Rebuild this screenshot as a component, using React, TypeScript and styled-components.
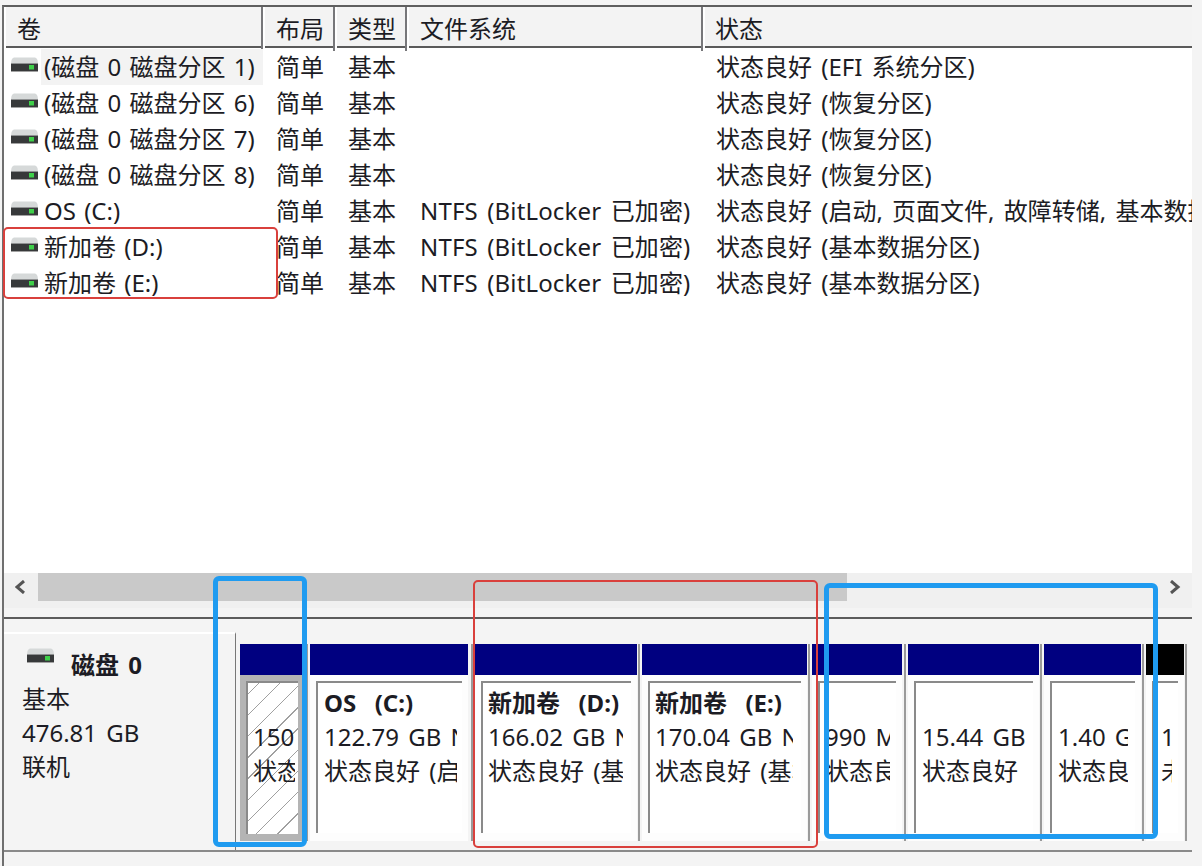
import React from 'react'
import styled, { createGlobalStyle } from 'styled-components'

const GlobalStyle = createGlobalStyle`
    html, body {
        margin: 0;
        padding: 0;
        background: #f4f4f4;
    }
    body {
        font-family: "Noto Sans", "Noto Sans CJK SC", sans-serif;
        font-size: 24px;
        word-spacing: 3px;
        color: #1c1c24;
    }
`

const Page = styled.div`
    position: relative;
    width: 1202px;
    height: 866px;
    overflow: hidden;
    display: flex;
    flex-direction: column;
    box-sizing: border-box;
    padding: 5px 10px 0 2px;
    background: #f4f4f4;
`

const Frame = styled.div`
    flex: 1;
    display: flex;
    flex-direction: column;
    min-height: 0;
    border-left: 2px solid #6f6f6f;
    border-top: 2px solid #5f5f5f;
    background: #fff;
`

const HeaderRow = styled.div`
    display: grid;
    grid-template-columns: 259px 72px 72px 296px 1fr;
    height: 39px;
    flex: none;
    border-bottom: 2px solid #5a5a5a;
    background: #f3f3f3;
`

const HeaderCell = styled.div<{ $pad: number }>`
    padding-left: ${(p) => p.$pad}px;
    border-right: 2px solid #77777a;
    box-shadow: inset 2px 0 0 #fff;
    line-height: 44px;
    &:last-child {
        border-right: none;
    }
`

const List = styled.div`
    flex: 1;
    min-height: 0;
    padding-top: 1px;
`

const Row = styled.div`
    display: grid;
    grid-template-columns: 259px 72px 72px 296px 1fr;
    height: 36px;
    line-height: 36px;
    white-space: nowrap;
`

const NameCell = styled.div`
    display: flex;
    align-items: center;
    gap: 3px;
    padding-left: 7px;
    overflow: hidden;
`

const NameText = styled.span<{ $active?: boolean }>`
    flex: 1;
    padding-left: 3px;
    word-spacing: 2px;
    background: ${(p) => (p.$active ? '#f3f3f3' : 'transparent')};
`

const Cell = styled.div`
    padding-left: 13px;
    overflow: hidden;
`

const FsCell = styled(Cell)`
    letter-spacing: 0.15px;
`

const ScrollBar = styled.div`
    flex: none;
    height: 28px;
    display: flex;
    align-items: stretch;
    background: #f0f0f0;
`

const ScrollArrow = styled.div`
    width: 34px;
    flex: none;
    display: flex;
    align-items: center;
    justify-content: center;
`

const ScrollTrack = styled.div`
    flex: 1;
`

const ScrollThumb = styled.div`
    width: 809px;
    height: 100%;
    background: #c9c9c9;
`

const SplitGap = styled.div`
    flex: none;
    height: 18px;
    box-sizing: border-box;
    background: #f4f4f4;
    border-top: 7px solid #f0f0f0;
    border-bottom: 2px solid #5c5c5c;
`

const DiskPanel = styled.div`
    flex: none;
    height: 233px;
    display: flex;
    background: #f4f4f4;
    border-bottom: 2px solid #8a8a8a;
    box-sizing: border-box;
`

const DiskInfo = styled.div`
    flex: none;
    width: 232px;
    box-sizing: border-box;
    margin-top: 13px;
    padding: 14px 0 0 18px;
    border-top: 2px solid #fff;
    border-right: 1px solid #777;
    line-height: 34px;
`

const DiskTitle = styled.div`
    display: flex;
    align-items: center;
    gap: 17px;
    padding-left: 5px;
    font-weight: 700;
    & > svg {
        margin-bottom: 18px;
    }
`

const Volumes = styled.div`
    flex: 1;
    display: flex;
    padding: 25px 0 9px 4px;
    min-width: 0;
`

const Volume = styled.div<{ $width: number; $gap: number }>`
    flex: none;
    width: ${(p) => p.$width - 2}px;
    margin-right: 2px;
    box-sizing: border-box;
    display: flex;
    flex-direction: column;
    border-right: 2px solid #9a9a9a;
    padding-right: ${(p) => p.$gap - 4}px;
`

const VolumeBar = styled.div<{ $free?: boolean }>`
    flex: none;
    height: 31px;
    background: ${(p) => (p.$free ? '#000' : '#000080')};
`

const VolumeBody = styled.div<{ $hatched?: boolean }>`
    flex: 1;
    min-height: 0;
    padding: 6px ${(p) => (p.$hatched ? 4 : 6)}px ${(p) => (p.$hatched ? 7 : 8)}px 6px;
    background: ${(p) => (p.$hatched ? '#b4b4b4' : '#fdfdfd')};
`

const VolumeInner = styled.div<{ $hatched?: boolean }>`
    height: 100%;
    box-sizing: border-box;
    border-left: 2px solid #8a8a8a;
    border-top: 2px solid #8a8a8a;
    padding-top: 3px;
    background: ${(p) =>
        p.$hatched
            ? 'repeating-linear-gradient(-45deg, #fff 0 14px, #a0a0a0 14px 15px)'
            : '#fff'};
`

const VolumeText = styled.div<{ $pad: number; $clip: number }>`
    overflow: hidden;
    margin-right: ${(p) => p.$clip}px;
    padding-left: ${(p) => p.$pad}px;
    line-height: 34px;
    white-space: pre;
`

const VolumeName = styled.div`
    font-weight: 700;
    height: 34px;
`

const Footer = styled.div`
    flex: none;
    height: 14px;
    background: #f4f4f4;
`

const Mark = styled.div<{ $x: number; $y: number; $w: number; $h: number; $blue?: boolean }>`
    position: absolute;
    left: ${(p) => p.$x}px;
    top: ${(p) => p.$y}px;
    width: ${(p) => p.$w}px;
    height: ${(p) => p.$h}px;
    box-sizing: border-box;
    border: ${(p) => (p.$blue ? '5px solid #1f9bf0' : '2px solid #d9403c')};
    border-radius: ${(p) => (p.$blue ? 6 : 5)}px;
    pointer-events: none;
`

const DriveSvg = styled.svg`
    flex: none;
    margin-bottom: 4px;
`

const DriveIcon: React.FC = () => (
    <DriveSvg width="27" height="16" viewBox="0 0 27 16">
        <path d="M3 0.5 H24 Q25.5 0.5 26.5 3 L27 6.5 H0 L0.5 3 Q1.5 0.5 3 0.5 Z" fill="#d6d9d9" />
        <rect x="0" y="6.5" width="27" height="7.5" fill="#37393a" />
        <rect x="0" y="14" width="27" height="1" fill="#a2a2a2" />
        <rect x="18" y="8" width="5" height="4.5" fill="#3fd04a" />
    </DriveSvg>
)

const Chevron: React.FC<{ dir: 'left' | 'right' }> = ({ dir }) => (
    <svg width="12" height="14" viewBox="0 0 12 14">
        <path
            d={dir === 'left' ? 'M9 1 L2 7 L9 13' : 'M2 1 L9 7 L2 13'}
            fill="none"
            stroke="#555"
            strokeWidth="3"
        />
    </svg>
)

const rows = [
    { name: '(磁盘 0 磁盘分区 1)', fs: '', status: '状态良好 (EFI 系统分区)', active: true },
    { name: '(磁盘 0 磁盘分区 6)', fs: '', status: '状态良好 (恢复分区)' },
    { name: '(磁盘 0 磁盘分区 7)', fs: '', status: '状态良好 (恢复分区)' },
    { name: '(磁盘 0 磁盘分区 8)', fs: '', status: '状态良好 (恢复分区)' },
    { name: 'OS (C:)', fs: 'NTFS (BitLocker 已加密)', status: '状态良好 (启动, 页面文件, 故障转储, 基本数据分区)' },
    { name: '新加卷 (D:)', fs: 'NTFS (BitLocker 已加密)', status: '状态良好 (基本数据分区)' },
    { name: '新加卷 (E:)', fs: 'NTFS (BitLocker 已加密)', status: '状态良好 (基本数据分区)' },
]

const volumes = [
    { width: 70, gap: 8, pad: 5, clip: 3, size: '150 MB', status: '状态良好', hatched: true },
    { width: 165, gap: 7, pad: 6, clip: 5, name: 'OS  (C:)', size: '122.79 GB NTFS', status: '状态良好 (启动)' },
    { width: 167, gap: 5, pad: 5, clip: 8, name: '新加卷  (D:)', size: '166.02 GB NTFS', status: '状态良好 (基本)' },
    { width: 170, gap: 5, pad: 5, clip: 8, name: '新加卷  (E:)', size: '170.04 GB NTFS', status: '状态良好 (基本)' },
    { width: 96, gap: 6, pad: 5, clip: 6, size: '990 MB', status: '状态良好' },
    { width: 136, gap: 5, pad: 6, clip: 5, size: '15.44 GB', status: '状态良好' },
    { width: 102, gap: 5, pad: 6, clip: 7, size: '1.40 GB', status: '状态良好' },
    { width: 43, gap: 5, pad: 7, clip: 6, size: '15 MB', status: '未分配', free: true },
]

const App: React.FC = () => {
    return (
        <Page>
            <GlobalStyle />
            <Frame>
                <HeaderRow>
                    <HeaderCell $pad={13}>卷</HeaderCell>
                    <HeaderCell $pad={13}>布局</HeaderCell>
                    <HeaderCell $pad={13}>类型</HeaderCell>
                    <HeaderCell $pad={13}>文件系统</HeaderCell>
                    <HeaderCell $pad={12}>状态</HeaderCell>
                </HeaderRow>
                <List>
                    {rows.map((r) => (
                        <Row key={r.name}>
                            <NameCell>
                                <DriveIcon />
                                <NameText $active={r.active}>{r.name}</NameText>
                            </NameCell>
                            <Cell>简单</Cell>
                            <Cell>基本</Cell>
                            <FsCell>{r.fs}</FsCell>
                            <Cell>{r.status}</Cell>
                        </Row>
                    ))}
                </List>
                <ScrollBar>
                    <ScrollArrow>
                        <Chevron dir="left" />
                    </ScrollArrow>
                    <ScrollTrack>
                        <ScrollThumb />
                    </ScrollTrack>
                    <ScrollArrow>
                        <Chevron dir="right" />
                    </ScrollArrow>
                </ScrollBar>
                <SplitGap />
                <DiskPanel>
                    <DiskInfo>
                        <DiskTitle>
                            <DriveIcon />
                            磁盘 0
                        </DiskTitle>
                        <div>基本</div>
                        <div>476.81 GB</div>
                        <div>联机</div>
                    </DiskInfo>
                    <Volumes>
                        {volumes.map((v) => (
                            <Volume key={v.size} $width={v.width} $gap={v.gap}>
                                <VolumeBar $free={v.free} />
                                <VolumeBody $hatched={v.hatched}>
                                    <VolumeInner $hatched={v.hatched}>
                                        <VolumeText $pad={v.pad} $clip={v.clip}>
                                            <VolumeName>{v.name ?? ''}</VolumeName>
                                            <div>{v.size}</div>
                                            <div>{v.status}</div>
                                        </VolumeText>
                                    </VolumeInner>
                                </VolumeBody>
                            </Volume>
                        ))}
                    </Volumes>
                </DiskPanel>
                <Footer />
            </Frame>
            <Mark $x={3} $y={227} $w={275} $h={72} />
            <Mark $x={473} $y={580} $w={345} $h={268} />
            <Mark $x={213} $y={576} $w={94} $h={271} $blue />
            <Mark $x={824} $y={583} $w={334} $h={256} $blue />
        </Page>
    )
}

export default App
